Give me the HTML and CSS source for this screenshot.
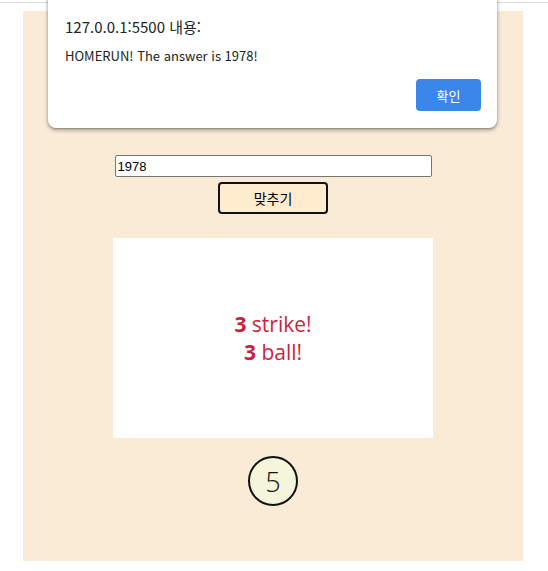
FILE: index.html
```html
<!DOCTYPE html>
<html lang="ko">
<head>
<meta charset="utf-8">
<link rel="stylesheet" href="styles.css">
</head>
<body>
<div class="chrome-line"></div>
<main class="panel">
  <input class="guess" type="text" value="1978">
  <button class="submit">맞추기</button>
  <div class="result">
    <p><b>3</b> strike!</p>
    <p><b>3</b> ball!</p>
  </div>
  <div class="count">5</div>
</main>
<div class="dialog">
  <div class="dialog-title">127.0.0.1:5500 내용:</div>
  <div class="dialog-msg">HOMERUN! The answer is 1978!</div>
  <div class="dialog-actions"><button class="ok">확인</button></div>
</div>
</body>
</html>
```
FILE: styles.css
```css
html, body { margin: 0; padding: 0; background: #fff; }
body { width: 548px; height: 571px; position: relative; overflow: hidden; font-family: "Noto Sans CJK KR", "Noto Sans", sans-serif; }
.chrome-line { height: 2px; border-bottom: 1px solid #dcdcdc; }
.panel {
  margin: 8px 0 0 23px;
  width: 500px; height: 550px;
  background: #faebd7;
  display: flex; flex-direction: column; align-items: center;
  padding-top: 144px; box-sizing: border-box;
}
.guess {
  width: 317px; height: 22px; box-sizing: border-box;
  border: 1px solid #767676; border-radius: 2px;
  font: 13px "Liberation Sans", Arial, sans-serif; color: #000;
  padding: 1px 2px; margin: 0;
}
.submit {
  margin-top: 5px;
  width: 110px; height: 32px; box-sizing: border-box;
  background: #ffebcd; border: 2px solid #111; border-radius: 4px;
  font: 14px "Noto Sans CJK KR", sans-serif; color: #000;
  padding: 0;
}
.result {
  margin-top: 24px;
  width: 320px; height: 200px; background: #fff;
  display: flex; flex-direction: column; justify-content: center; align-items: center;
  color: #cc1f3f; font-family: "Open Sans", "Noto Sans CJK KR", sans-serif; font-size: 21px; line-height: 28px;
}
.result p { margin: 0; }
.result b { font-weight: 700; }
.count {
  margin-top: 18px;
  width: 50px; height: 50px; box-sizing: border-box;
  border: 2px solid #111; border-radius: 50%;
  background: #f5f5dc;
  display: flex; align-items: center; justify-content: center;
  font-family: "Open Sans", sans-serif; font-size: 27px; font-weight: 300; color: #111;
}
.dialog {
  position: absolute; left: 48px; top: -10px;
  width: 449px; height: 138px; box-sizing: border-box;
  background: #fff; border-radius: 8px;
  box-shadow: 0 2px 4px rgba(0,0,0,0.35), 0 1px 2px rgba(0,0,0,0.2);
  padding: 26px 16px 0 17px;
}
.dialog-title { font-size: 15px; color: #222; line-height: 22px; }
.dialog-msg { margin-top: 9px; font-size: 13px; color: #222; line-height: 18px; }
.dialog-actions { display: flex; justify-content: flex-end; margin-top: 14px; }
.ok {
  width: 65px; height: 32px; border: none; border-radius: 4px;
  background: #3b86e9; color: #fff; font: 13px "Noto Sans CJK KR", sans-serif; padding: 0;
}
```
